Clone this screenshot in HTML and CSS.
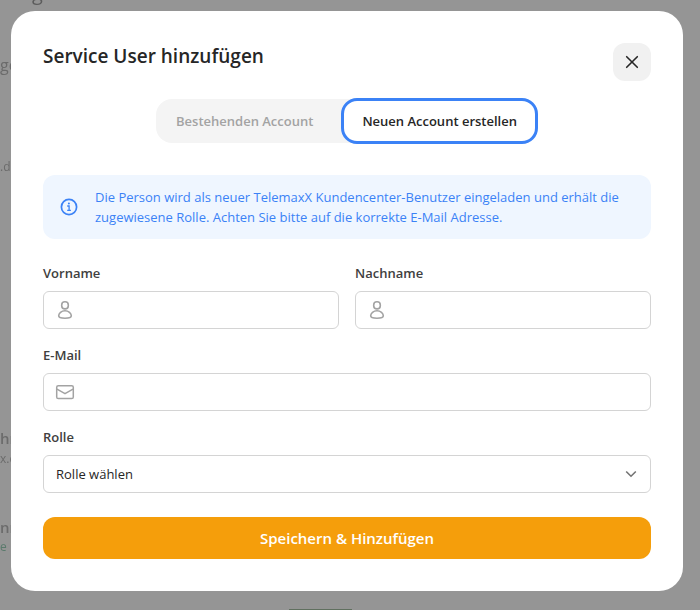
FILE: index.html
```html
<!DOCTYPE html>
<html lang="de">
<head>
<meta charset="utf-8">
<meta name="viewport" content="width=device-width, initial-scale=1">
<title>Service User hinzufügen</title>
<link rel="stylesheet" href="styles.css">
</head>
<body>
<div class="page" aria-hidden="true">
  <span class="bg bg-head">g</span>
  <span class="bg bg-sub">ge</span>
  <span class="bg bg-domain">.de</span>
  <span class="bg bg-name-a">hn</span>
  <span class="bg bg-mail-a">x.c</span>
  <span class="bg bg-name-b">nr</span>
  <span class="bg bg-mail-b">e</span>
  <span class="bg bg-bar"></span>
</div>
<div class="overlay">
  <main class="modal" role="dialog" aria-modal="true" aria-labelledby="title">
    <header class="modal-header">
      <h1 class="title" id="title">Service User hinzufügen</h1>
      <button class="close" type="button" aria-label="Schließen">
        <svg class="close-icon" viewBox="0 0 14 14" fill="none" stroke="currentColor" stroke-width="1.6" stroke-linecap="round"><path d="M1.7 1.7 12.3 12.3M12.3 1.7 1.7 12.3"/></svg>
      </button>
    </header>
    <div class="tabs">
      <button class="tab" type="button">Bestehenden Account</button>
      <button class="tab tab-active" type="button">Neuen Account erstellen</button>
    </div>
    <div class="notice">
      <svg class="notice-icon" viewBox="0 0 20 20" fill="none" stroke="currentColor" stroke-width="1.7"><circle cx="10" cy="10" r="7.6"/><path d="M8.2 9h1.9v4.1M8.2 13.3h3.7" stroke-width="1.3"/><circle cx="9.9" cy="6.6" r="1" fill="currentColor" stroke="none"/></svg>
      <p class="notice-text">Die Person wird als neuer TelemaxX Kundencenter-Benutzer eingeladen und erhält die zugewiesene Rolle. Achten Sie bitte auf die korrekte E-Mail Adresse.</p>
    </div>
    <form class="form">
      <div class="row">
        <div class="field">
          <label class="label" for="vorname">Vorname</label>
          <div class="control">
            <svg class="field-icon" viewBox="0 0 20 20" fill="none" stroke="currentColor" stroke-width="1.6"><rect x="6.7" y="1.7" width="6.6" height="7.2" rx="3.2"/><path d="M10 10.8c-3.6 0-6.3 2.4-6.3 5 0 1.5 2.7 2.4 6.3 2.4s6.3-.9 6.3-2.4c0-2.6-2.7-5-6.3-5z"/></svg>
            <input class="input" id="vorname" type="text">
          </div>
        </div>
        <div class="field">
          <label class="label" for="nachname">Nachname</label>
          <div class="control">
            <svg class="field-icon" viewBox="0 0 20 20" fill="none" stroke="currentColor" stroke-width="1.6"><rect x="6.7" y="1.7" width="6.6" height="7.2" rx="3.2"/><path d="M10 10.8c-3.6 0-6.3 2.4-6.3 5 0 1.5 2.7 2.4 6.3 2.4s6.3-.9 6.3-2.4c0-2.6-2.7-5-6.3-5z"/></svg>
            <input class="input" id="nachname" type="text">
          </div>
        </div>
      </div>
      <div class="field">
        <label class="label" for="email">E-Mail</label>
        <div class="control">
          <svg class="field-icon" viewBox="0 0 20 20" fill="none" stroke="currentColor" stroke-width="1.5" stroke-linejoin="round"><rect x="1.7" y="3.7" width="16.6" height="12.8" rx="1.6"/><path d="M2 7.2 10 11.7 18 7.2"/></svg>
          <input class="input" id="email" type="email">
        </div>
      </div>
      <div class="field">
        <label class="label" for="rolle">Rolle</label>
        <div class="control">
          <select class="select" id="rolle"><option>Rolle wählen</option></select>
          <svg class="chevron" viewBox="0 0 12 12" fill="none" stroke="currentColor" stroke-width="1.6"><path d="M1.2 3.5 6 8.2 10.8 3.5"/></svg>
        </div>
      </div>
      <button class="submit" type="submit">Speichern &amp; Hinzufügen</button>
    </form>
  </main>
</div>
</body>
</html>
```
FILE: styles.css
```css
* { box-sizing: border-box; }
body {
  margin: 0;
  background: #959595;
  color: #262626;
  font-family: "Segoe UI", "Open Sans", "Noto Sans", sans-serif;
  font-size: 13px;
  line-height: 20px;
}
button, input, select { font: inherit; color: inherit; margin: 0; }

/* Dimmed page that shows around the dialog */
.page { position: fixed; inset: 0; overflow: hidden; color: #6b6b6b; }
.bg { position: absolute; left: 0; }
.bg-head { top: -19px; left: 32px; font-size: 20px; line-height: 24px; color: #5c5c5c; }
.bg-sub { top: 55px; font-size: 16px; }
.bg-domain { top: 157px; font-size: 12px; }
.bg-name-a { top: 428px; font-size: 15px; font-weight: 600; }
.bg-mail-a { top: 449px; font-size: 12px; }
.bg-name-b { top: 517px; font-size: 15px; font-weight: 600; }
.bg-mail-b { top: 537px; font-size: 12px; color: #5a7a6c; }
.bg-bar { left: 289px; bottom: 0; width: 63px; height: 1px; background: #60705f; }

.overlay { position: relative; padding: 11px 17px 19px 11px; }
.modal {
  max-width: 672px;
  margin: 0 auto;
  padding: 32px;
  border-radius: 24px;
  background: #fff;
}
.modal-header { display: flex; justify-content: space-between; align-items: flex-start; }
.title { margin: 0; font-size: 19px; line-height: 26px; font-weight: 600; }
.close {
  display: grid;
  place-items: center;
  width: 38px;
  height: 38px;
  padding: 0;
  border: 0;
  border-radius: 12px;
  background: #f1f1f1;
}
.close-icon { width: 14px; height: 14px; }

.tabs {
  display: flex;
  gap: 8px;
  width: fit-content;
  height: 44px;
  margin: 18px auto 32px;
  border-radius: 16px;
  background: #f4f4f4;
}
.tab {
  padding: 0 20px;
  border: 0;
  border-radius: 16px;
  background: transparent;
  color: #a3a3a3;
  font-weight: 600;
}
.tab-active {
  margin: -1px 0;
  padding: 0 18px;
  border: 3px solid #3b82f6;
  background: #fff;
  color: #262626;
}

.notice {
  display: flex;
  align-items: center;
  gap: 16px;
  padding: 12px 16px;
  border-radius: 12px;
  background: #eff6ff;
  color: #3b82f6;
}
.notice-icon { flex: none; width: 20px; height: 20px; }
.notice-text { margin: 0; }

.form { display: grid; gap: 16px; margin-top: 24px; }
.row { display: grid; grid-template-columns: 1fr 1fr; gap: 16px; }
.field { display: grid; gap: 8px; }
.label { color: #404040; font-weight: 600; }
.control { position: relative; }
.input, .select {
  display: block;
  width: 100%;
  height: 38px;
  padding: 0 12px;
  border: 1px solid #d4d4d4;
  border-radius: 6px;
  background: #fff;
}
.input { padding-left: 40px; }
.select { appearance: none; }
.field-icon { position: absolute; left: 12px; top: 9px; width: 20px; height: 20px; color: #a3a3a3; pointer-events: none; }
.chevron { position: absolute; right: 14px; top: 13px; width: 12px; height: 12px; color: #737373; pointer-events: none; }
.submit {
  height: 42px;
  margin-top: 8px;
  border: 0;
  border-radius: 12px;
  background: #f59e0b;
  color: #fff;
  font-size: 15px;
  font-weight: 600;
}
```
